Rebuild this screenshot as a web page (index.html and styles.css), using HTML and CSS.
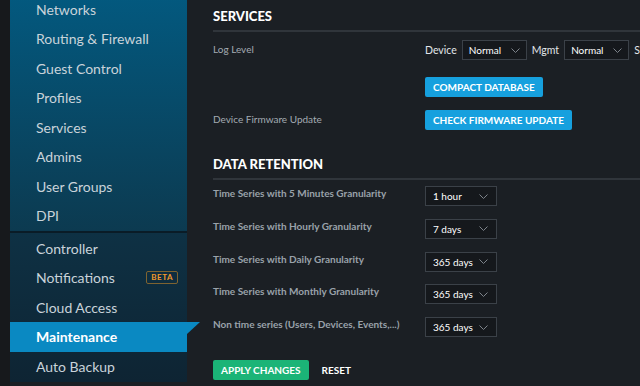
FILE: index.html
```html
<!DOCTYPE html>
<html lang="en">
<head>
    <meta charset="UTF-8">
    <meta name="viewport" content="width=device-width, initial-scale=1.0">
    <title>Settings - Maintenance</title>
    <link rel="stylesheet" href="styles.css">
</head>
<body>
    <div class="wrap">
        <div class="strip"></div>
        <div class="sidebar">
            <ul class="nav nav-top">
                <li>Networks</li>
                <li>Routing &amp; Firewall</li>
                <li>Guest Control</li>
                <li>Profiles</li>
                <li>Services</li>
                <li>Admins</li>
                <li>User Groups</li>
                <li>DPI</li>
            </ul>
            <ul class="nav nav-bottom">
                <li>Controller</li>
                <li>Notifications <span class="beta">BETA</span></li>
                <li>Cloud Access</li>
                <li class="active">Maintenance</li>
                <li>Auto Backup</li>
            </ul>
        </div>
        <div class="main">
            <h2 class="section-title">SERVICES</h2>
            <div class="row row-first">
                <div class="label">Log Level</div>
                <div class="control">
                    <span class="ctl-label">Device</span>
                    <div class="select sm">Normal <svg width="9" height="5" viewBox="0 0 9 5"><path d="M0.5 0.5 L4.5 4.5 L8.5 0.5" fill="none" stroke="#7d838a" stroke-width="1"/></svg></div>
                    <span class="ctl-label">Mgmt</span>
                    <div class="select sm">Normal <svg width="9" height="5" viewBox="0 0 9 5"><path d="M0.5 0.5 L4.5 4.5 L8.5 0.5" fill="none" stroke="#7d838a" stroke-width="1"/></svg></div>
                    <span class="ctl-label">S</span>
                </div>
            </div>
            <div class="row row-btn">
                <div class="label"></div>
                <div class="control"><button class="btn blue">COMPACT DATABASE</button></div>
            </div>
            <div class="row row-btn2">
                <div class="label">Device Firmware Update</div>
                <div class="control"><button class="btn blue">CHECK FIRMWARE UPDATE</button></div>
            </div>

            <h2 class="section-title second">DATA RETENTION</h2>
            <div class="retention">
                <div class="row ret">
                    <div class="label">Time Series with 5 Minutes Granularity</div>
                    <div class="select md">1 hour <svg width="9" height="5" viewBox="0 0 9 5"><path d="M0.5 0.5 L4.5 4.5 L8.5 0.5" fill="none" stroke="#7d838a" stroke-width="1"/></svg></div>
                </div>
                <div class="row ret">
                    <div class="label">Time Series with Hourly Granularity</div>
                    <div class="select md">7 days <svg width="9" height="5" viewBox="0 0 9 5"><path d="M0.5 0.5 L4.5 4.5 L8.5 0.5" fill="none" stroke="#7d838a" stroke-width="1"/></svg></div>
                </div>
                <div class="row ret">
                    <div class="label">Time Series with Daily Granularity</div>
                    <div class="select md">365 days <svg width="9" height="5" viewBox="0 0 9 5"><path d="M0.5 0.5 L4.5 4.5 L8.5 0.5" fill="none" stroke="#7d838a" stroke-width="1"/></svg></div>
                </div>
                <div class="row ret">
                    <div class="label">Time Series with Monthly Granularity</div>
                    <div class="select md">365 days <svg width="9" height="5" viewBox="0 0 9 5"><path d="M0.5 0.5 L4.5 4.5 L8.5 0.5" fill="none" stroke="#7d838a" stroke-width="1"/></svg></div>
                </div>
                <div class="row ret">
                    <div class="label">Non time series (Users, Devices, Events,...)</div>
                    <div class="select md">365 days <svg width="9" height="5" viewBox="0 0 9 5"><path d="M0.5 0.5 L4.5 4.5 L8.5 0.5" fill="none" stroke="#7d838a" stroke-width="1"/></svg></div>
                </div>
            </div>
            <div class="actions">
                <button class="btn green">APPLY CHANGES</button>
                <button class="btn link">RESET</button>
            </div>
        </div>
    </div>
</body>
</html>
```

FILE: styles.css
```css
html, body {
    margin: 0;
    height: 100%;
    overflow: hidden;
}
body {
    background-color: #1b1f24;
    font-family: Lato, "Liberation Sans", sans-serif;
    color: #e6e9ec;
}
.wrap {
    display: flex;
    height: 386px;
}
.strip {
    width: 10px;
    background-color: #17191c;
}

/* sidebar */
.sidebar {
    width: 177px;
    height: 382px;
    display: flex;
    flex-direction: column;
    background-color: #0d2534;
}
.nav {
    list-style: none;
    margin: 0;
    padding: 0;
}
.nav li {
    position: relative;
    display: flex;
    align-items: center;
    height: 29.5px;
    padding-left: 26px;
    font-size: 14px;
    color: #c9d3da;
}
.nav-top {
    margin-top: -5.5px;
    background: linear-gradient(#03597f, #0c3a50);
    border-bottom: 2px solid #0a1c27;
}
.nav-bottom {
    flex: 1;
    padding-top: 1px;
    background: linear-gradient(#0e3144, #0e2433);
}
.nav li.active {
    background-color: #0a89c2;
    color: #fff;
    font-weight: bold;
}
.nav li.active::after {
    content: "";
    position: absolute;
    right: -13px;
    top: 0;
    border-top: 12px solid #0a89c2;
    border-right: 13px solid transparent;
}
.beta {
    margin-left: auto;
    margin-right: 9px;
    padding: 0 4px;
    height: 11px;
    line-height: 11px;
    border: 1px solid #7e6330;
    border-radius: 2px;
    font-size: 8px;
    font-weight: bold;
    letter-spacing: 0.5px;
    color: #f39a2b;
}

/* main */
.main {
    flex: 1;
    padding-left: 26px;
    overflow: hidden;
}
.section-title {
    margin: 0;
    padding-top: 8px;
    padding-bottom: 6px;
    line-height: 16px;
    font-size: 13px;
    font-weight: 900;
    color: #fff;
    border-bottom: 2px solid #30353b;
}
.section-title.second {
    margin-top: 18px;
}
.row {
    display: flex;
    align-items: center;
}
.label {
    width: 212px;
    flex-shrink: 0;
    font-size: 10px;
    color: #a3abb3;
}
.control {
    display: flex;
    align-items: center;
    white-space: nowrap;
}
.row-first {
    margin-top: 8px;
    height: 20px;
}
.row-first .label {
    margin-top: -2px;
}
.row-btn {
    margin-top: 17px;
}
.row-btn2 {
    margin-top: 13px;
}
.row-btn2 .label {
    margin-top: -3px;
}
.ctl-label {
    font-size: 10.5px;
    color: #e2e6ea;
    margin: 0 5px 0 0;
}
.select {
    display: flex;
    align-items: center;
    justify-content: space-between;
    box-sizing: border-box;
    height: 20px;
    padding: 0 6px 0 6px;
    background-color: #15181c;
    border: 1px solid #3b4148;
    font-size: 10px;
    color: #fff;
    white-space: nowrap;
}
.select.sm {
    width: 65px;
    margin-right: 5px;
}
.select.md {
    width: 72px;
    padding-left: 7px;
    padding-right: 8px;
}

.retention {
    display: flex;
    flex-direction: column;
    gap: 12.75px;
    margin-top: 6px;
}
.ret {
    align-items: flex-start;
}
.ret .label {
    line-height: 14px;
    font-weight: bold;
    color: #9aa2aa;
}
.btn {
    box-sizing: border-box;
    height: 20px;
    padding: 0 8px;
    border: none;
    border-radius: 2px;
    font-family: Lato, "Liberation Sans", sans-serif;
    font-size: 10px;
    font-weight: bold;
    color: #fff;
}
.btn.blue {
    background-color: #16a0de;
}
.btn.green {
    background-color: #1bb477;
}
.btn.link {
    background: none;
    padding: 0 13px;
    color: #fff;
}
.actions {
    display: flex;
    margin-top: 23px;
}
```
